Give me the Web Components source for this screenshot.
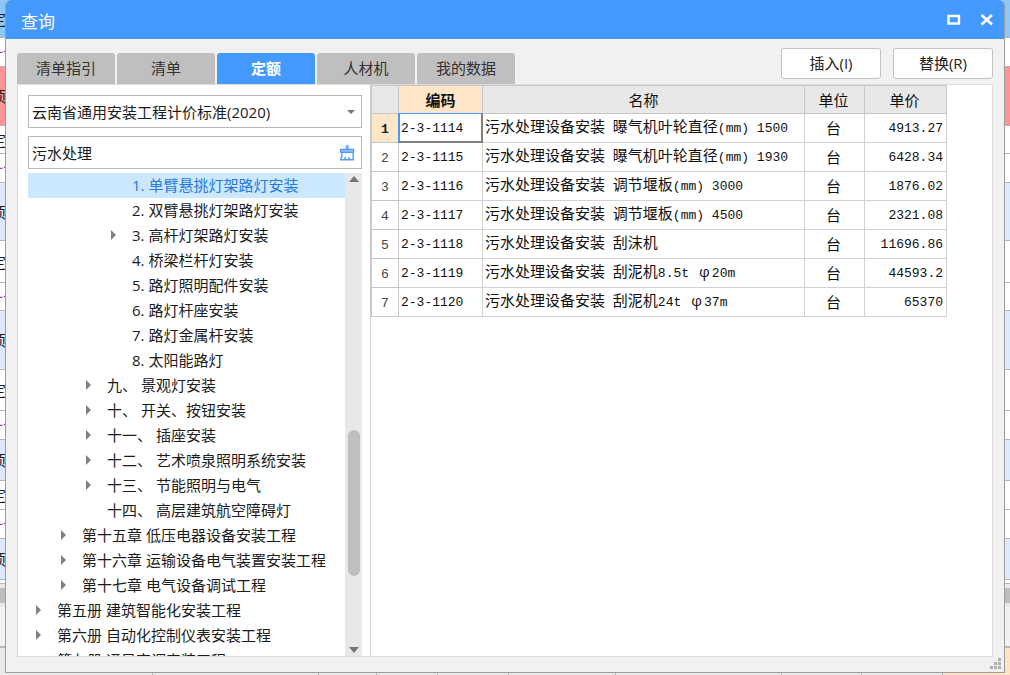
<!DOCTYPE html>
<html lang="zh-CN">
<head>
<meta charset="utf-8">
<meta name="viewport" content="width=device-width, initial-scale=1">
<title>查询</title>
<style>
body { margin: 0; font: 15px/24px "Open Sans", "Noto Sans CJK SC", sans-serif; color: #1c1c1c; }
</style>
</head>
<body>
<query-app></query-app>

<script>
const define = (name, html, setup) => {
  const template = document.createElement('template');
  template.innerHTML = html;
  customElements.define(name, class extends HTMLElement {
    constructor() {
      super();
      this.attachShadow({ mode: 'open' }).append(template.content.cloneNode(true));
    }
    connectedCallback() { if (setup) setup(this, this.shadowRoot); }
  });
};

/* Worksheet that stays visible round the edges of the dialog */
define('sheet-backdrop', `
<style>
:host { display: flex; flex-direction: column; overflow: hidden; background: #e9e9e9; }
.row { box-sizing: border-box; flex: none; display: flex; align-items: center; border-bottom: 1px solid #b4b4b4; background: #fff; text-indent: -9px; white-space: nowrap; overflow: hidden; }
.row span { width: 5px; }
.head { background: #8ec6f6; }
.red { background: #ff9494; }
.blue { background: #dce9ff; }
.sub { color: #a838b8; text-indent: -12px; }
.bar { flex: none; height: 15px; margin: 4px 0; background: #bdbdbd; }
.foot { flex: none; height: 39px; background: #f2f2f2; border-bottom: 2px solid #b9b9b9; }
.rest { flex: 1; display: grid; grid-template-columns: 153fr 166fr 58fr 61fr 71fr 107fr 166fr 80fr 81fr 67fr; }
.rest i { border-right: 1px solid #b4b4b4; }
.rest i:last-child { background: #ffe4c4; border: 0; }
</style>
<div id="rows"></div>
<div class="bar"></div>
<div class="foot"></div>
<div class="rest"><i></i><i></i><i></i><i></i><i></i><i></i><i></i><i></i><i></i><i></i></div>
`, (host, root) => {
  const rows = [
    [38, 'head', '定'], [29, 'sub', '一个'], [59, 'red', '项'], [28, '', '定'], [29, 'sub', '一个'],
    [58, 'blue', '项'], [42, '', '定'], [28, 'sub', '一个'], [59, 'blue', '项'], [41, '', '定'],
    [29, 'sub', '一个'], [41, 'blue', '项'], [29, '', '定'], [29, 'sub', '一个'], [41, 'blue', '项'], [4, '', '']
  ];
  root.getElementById('rows').innerHTML = rows.map(([h, kind, text]) =>
    `<div class="row ${kind}" style="height:${h}px"><span>${text}</span></div>`).join('');
});

define('title-bar', `
<style>
:host { display: flex; align-items: center; height: 39px; padding: 0 10px 0 15px; background: #4499ff; color: #fff; border-radius: 5px 5px 0 0; }
h1 { flex: 1; margin: 0; padding-top: 4px; font-size: 17px; font-weight: 400; line-height: 24px; }
button { display: flex; padding: 0; border: 0; background: none; }
button + button { margin-left: 19px; }
svg { display: block; }
</style>
<h1><slot></slot></h1>
<button type="button" aria-label="最大化"><svg width="14" height="14"><rect x="1.5" y="3" width="10.500" height="7.500" fill="none" stroke="#fff" stroke-width="2.4"/></svg></button>
<button type="button" aria-label="关闭"><svg width="14" height="14"><path d="M1.500 2 12 11.500M12 2 1.500 11.500" fill="none" stroke="#fff" stroke-width="2.6"/></svg></button>
`);

define('tab-button', `
<style>
:host { display: block; flex: 0 1 98px; }
button { width: 100%; height: 31px; padding: 0 0 2px; border: 0; border-radius: 3px 3px 0 0; background: #bfbfbf; color: #333; font: inherit; white-space: nowrap; }
:host([active]) button { background: #4499ff; color: #fff; font-weight: 700; }
</style>
<button type="button" role="tab"><slot></slot></button>
`, (host, root) => root.querySelector('button').setAttribute('aria-selected', host.hasAttribute('active')));

define('action-button', `
<style>
:host { display: block; width: 100px; }
button { box-sizing: border-box; width: 100%; height: 31px; padding: 0 0 2px; border: 1px solid #c2c2c2; border-radius: 3px; background: #fff; color: #222; font: inherit; white-space: nowrap; }
</style>
<button type="button"><slot></slot></button>
`);

define('standard-select', `
<style>
:host { display: grid; align-items: center; }
select, svg { grid-area: 1 / 1; }
select { box-sizing: border-box; width: 100%; height: 33px; padding: 0 24px 0 3px; border: 1px solid #b9b9b9; border-radius: 0; background: #fff; color: inherit; font: inherit; appearance: none; }
svg { justify-self: end; margin-right: 7px; pointer-events: none; }
</style>
<select aria-label="计价标准"><option>云南省通用安装工程计价标准(2020)</option></select>
<svg width="8" height="4"><path d="M0 0h8L4 4z" fill="#777"/></svg>
`);

define('keyword-input', `
<style>
:host { display: flex; align-items: center; box-sizing: border-box; height: 33px; padding: 0 6px 0 3px; border: 1px solid #b9b9b9; background: #fff; }
input { flex: 1; min-width: 0; padding: 0; border: 0; outline: 0; background: none; color: inherit; font: inherit; }
button { padding: 0; border: 0; background: none; }
svg { display: block; }
</style>
<input type="text" aria-label="关键字" value="污水处理">
<button type="button" aria-label="清除"><svg width="16" height="16"><path d="M7.200 .5h2v3.500h-2z" fill="#8fc0fb" stroke="#62a6fb"/><path d="M1.500 4.300h13v3h-13z" fill="#8fc0fb" stroke="#4f9bfa" stroke-width="1.300"/><path d="M3 7.500C3 10.500 2.600 12.800 1.800 14.800h12.400V7.500M5.500 14.500l1.200-2.600M10 14.500v-2.600" fill="none" stroke="#4f9bfa" stroke-width="1.400"/></svg></button>
`);

define('tree-node', `
<style>
:host { display: flex; align-items: center; box-sizing: border-box; height: 25px; padding-bottom: 2px; padding-left: calc(8px + (var(--level) - 1) * 25px); white-space: nowrap; }
:host([selected]) { background: #cce8ff; color: #2878dc; }
i { flex: none; box-sizing: border-box; width: 5px; height: 10px; margin-right: 16px; }
:host([closed]) i { border: solid transparent; border-width: 5px 0 5px 5px; border-left-color: #808080; }
</style>
<i></i><span><slot></slot></span>
`, host => { host.style.setProperty('--level', host.getAttribute('level')); host.setAttribute('role', 'treeitem'); });

define('tree-scrollbar', `
<style>
:host { display: grid; grid-template-rows: 12px 245fr 146fr 68fr 12px; flex: none; width: 17px; background: #e8e8e8; justify-items: center; align-items: center; }
b { grid-row: 3; width: 12px; height: 100%; border-radius: 6px; background: #bfbfbf; }
svg:last-child { grid-row: 5; }
</style>
<svg width="10" height="6"><path d="M0 6h10L5 0z" fill="#73737b"/></svg>
<b></b>
<svg width="10" height="6"><path d="M0 0h10L5 6z" fill="#73737b"/></svg>
`);

define('chapter-tree', `
<style>
:host { display: flex; flex: 1; min-height: 0; overflow: hidden; }
.nodes { flex: 1; min-width: 0; overflow: hidden; }
</style>
<div class="nodes" role="tree"><slot></slot></div>
<tree-scrollbar></tree-scrollbar>
`);

define('quota-table', `
<style>
:host { display: block; }
table { width: 576px; max-width: 100%; table-layout: fixed; border-collapse: collapse; color: #111; line-height: 20px; }
th, td { box-sizing: border-box; height: 29px; padding: 0 2px 1px; border: 1px solid #d2d2d2; overflow: hidden; white-space: nowrap; font-weight: 400; }
thead th { height: 28px; padding-bottom: 0; background: #e8e8e8; border-color: #c6c6c6; }
thead .current { background: #ffe6c8; font-weight: 700; }
tbody th { padding: 4px 2px 0; border-color: #c6c6c6; color: #444; font: 13px/20px "Liberation Mono", monospace; }
tbody .current { background: #ffe6c8; color: #222; font-weight: 700; }
td { text-align: left; }
td:nth-child(4) { text-align: center; }
td:nth-child(5) { text-align: right; padding-right: 3px; }
th:nth-child(4), td:nth-child(4), th:nth-child(5) { padding-right: 4px; }
.half { font: 13px/20px "Liberation Mono", monospace; white-space: pre; }
.full { display: inline-block; width: 15px; text-align: center; }
.cursor { position: relative; overflow: visible; }
.cursor::after { content: ""; position: absolute; inset: -1px; border: 2px solid; border-color: #4499ff #808080 #808080 #4499ff; border-top-width: 1px; }
</style>
<table>
<colgroup><col style="width:27px"><col style="width:84px"><col><col style="width:60px"><col style="width:82px"></colgroup>
<thead><tr><th></th><th class="current" scope="col">编码</th><th scope="col">名称</th><th scope="col">单位</th><th scope="col">单价</th></tr></thead>
<tbody></tbody>
</table>
`, (host, root) => {
  const rows = [
    ['2-3-1114', '污水处理设备安装 曝气机叶轮直径(mm) 1500', '台', '4913.27'],
    ['2-3-1115', '污水处理设备安装 曝气机叶轮直径(mm) 1930', '台', '6428.34'],
    ['2-3-1116', '污水处理设备安装 调节堰板(mm) 3000', '台', '1876.02'],
    ['2-3-1117', '污水处理设备安装 调节堰板(mm) 4500', '台', '2321.08'],
    ['2-3-1118', '污水处理设备安装 刮沫机', '台', '11696.86'],
    ['2-3-1119', '污水处理设备安装 刮泥机8.5t φ20m', '台', '44593.2'],
    ['2-3-1120', '污水处理设备安装 刮泥机24t φ37m', '台', '65370']
  ];
  const mark = text => text
    .replace(/[\x20-\x7e]+/g, run => `<span class="half">${run}</span>`)
    .replace('φ', '<span class="full">φ</span>');
  root.querySelector('tbody').innerHTML = rows.map((row, i) =>
    `<tr><th scope="row"${i ? '' : ' class="current"'}>${i + 1}</th>` +
    row.map((cell, j) => `<td${i || j ? '' : ' class="cursor"'}>${mark(cell)}</td>`).join('') + '</tr>').join('');
});

define('query-dialog', `
<style>
:host { display: flex; flex-direction: column; box-sizing: border-box; border: 1px solid #9c9c9c; border-top: 0; border-radius: 5px 5px 0 0; background: #f1f1f1; }
.tools { display: flex; align-items: end; padding: 9px 11px 0 11px; }
.tabs { display: flex; flex: 1; gap: 2px; min-width: 0; }
.actions { display: flex; gap: 12px; padding-bottom: 5px; }
main { display: flex; flex: 1; min-height: 0; margin: 0 11px; border: 1px solid #dcdcdc; background: #fff; }
.side { display: flex; flex-direction: column; box-sizing: border-box; flex: none; width: 352px; padding: 10px 8px 0 10px; }
.side > * + * { margin-top: 8px; }
.side chapter-tree { margin-top: 4px; }
.result { flex: 1; min-width: 0; border-left: 1px solid #d0d0d0; }
footer { display: flex; justify-content: end; height: 15px; padding-right: 3px; }
</style>
<title-bar>查询</title-bar>
<div class="tools">
  <div class="tabs" role="tablist">
    <tab-button>清单指引</tab-button><tab-button>清单</tab-button><tab-button active>定额</tab-button><tab-button>人材机</tab-button><tab-button>我的数据</tab-button>
  </div>
  <div class="actions"><action-button>插入(I)</action-button><action-button>替换(R)</action-button></div>
</div>
<main>
  <div class="side">
    <standard-select></standard-select>
    <keyword-input></keyword-input>
    <chapter-tree>
      <tree-node level="4" selected>1. 单臂悬挑灯架路灯安装</tree-node>
      <tree-node level="4">2. 双臂悬挑灯架路灯安装</tree-node>
      <tree-node level="4" closed>3. 高杆灯架路灯安装</tree-node>
      <tree-node level="4">4. 桥梁栏杆灯安装</tree-node>
      <tree-node level="4">5. 路灯照明配件安装</tree-node>
      <tree-node level="4">6. 路灯杆座安装</tree-node>
      <tree-node level="4">7. 路灯金属杆安装</tree-node>
      <tree-node level="4">8. 太阳能路灯</tree-node>
      <tree-node level="3" closed>九、 景观灯安装</tree-node>
      <tree-node level="3" closed>十、 开关、按钮安装</tree-node>
      <tree-node level="3" closed>十一、 插座安装</tree-node>
      <tree-node level="3" closed>十二、 艺术喷泉照明系统安装</tree-node>
      <tree-node level="3" closed>十三、 节能照明与电气</tree-node>
      <tree-node level="3">十四、 高层建筑航空障碍灯</tree-node>
      <tree-node level="2" closed>第十五章 低压电器设备安装工程</tree-node>
      <tree-node level="2" closed>第十六章 运输设备电气装置安装工程</tree-node>
      <tree-node level="2" closed>第十七章 电气设备调试工程</tree-node>
      <tree-node level="1" closed>第五册 建筑智能化安装工程</tree-node>
      <tree-node level="1" closed>第六册 自动化控制仪表安装工程</tree-node>
      <tree-node level="1">第七册 通风空调安装工程</tree-node>
    </chapter-tree>
  </div>
  <div class="result"><quota-table></quota-table></div>
</main>
<footer><svg width="11" height="12" fill="#b0b0b0"><path d="M8 1h3v3H8zM4 5h3v3H4zM8 5h3v3H8zM0 9h3v3H0zM4 9h3v3H4zM8 9h3v3H8z"/></svg></footer>
`);

define('query-app', `
<style>
:host { display: grid; grid-template: 100vh / 100%; overflow: hidden; }
sheet-backdrop, query-dialog { grid-area: 1 / 1; min-height: 0; }
query-dialog { z-index: 1; margin: 0 5px 2px; }
</style>
<sheet-backdrop></sheet-backdrop>
<query-dialog></query-dialog>
`);
</script>
</body>
</html>
